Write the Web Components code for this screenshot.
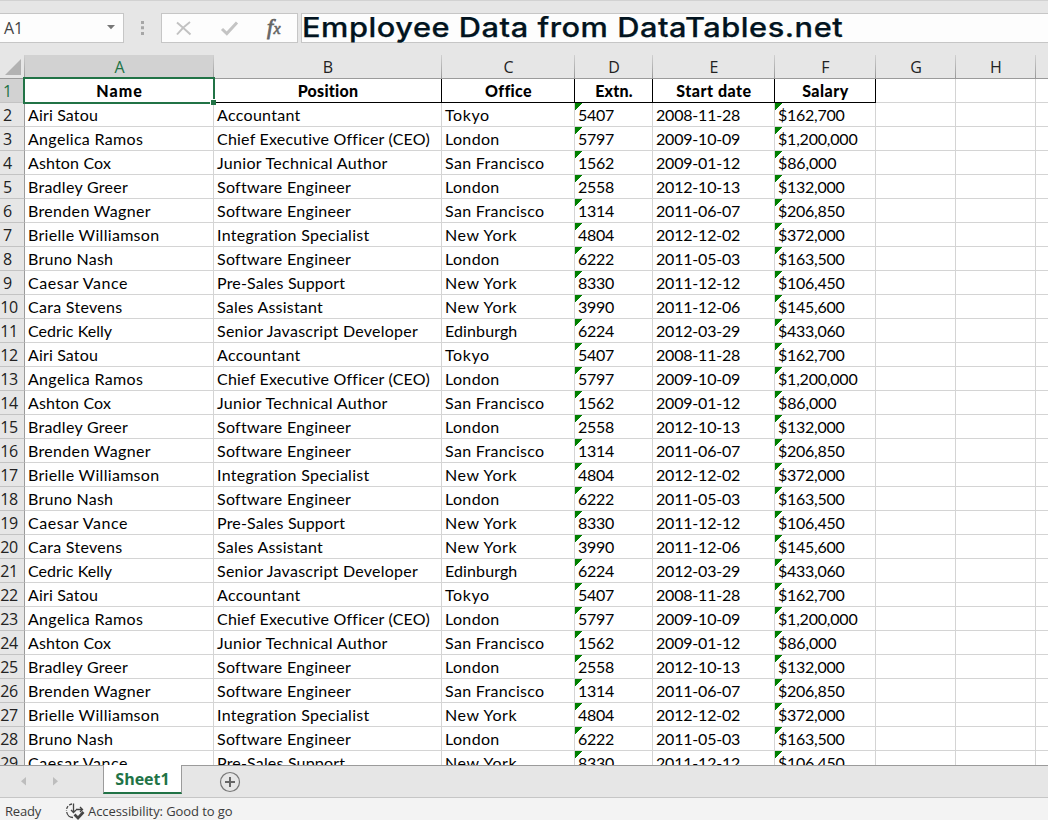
<!DOCTYPE html>
<html lang="en">
<head>
<meta charset="utf-8">
<title>Employee Data</title>
<style>
html,body{margin:0;height:100%;overflow:hidden;background:#e6e6e6}
</style>
</head>
<body>
<sheet-app></sheet-app>
<script>
class Base extends HTMLElement {
  render(css, html) {
    if (!this.shadowRoot) this.attachShadow({ mode: 'open' });
    this.shadowRoot.innerHTML = `<style>*{box-sizing:border-box}${css}</style>${html}`;
  }
}

/* Text whose tracking is adjusted so that it takes a given width. */
class FitText extends Base {
  connectedCallback() {
    this.render(':host{display:inline-block;white-space:pre}', '<slot></slot>');
    const w = parseFloat(this.getAttribute('w'));
    if (!w) return;
    const now = this.offsetWidth;
    this.style.letterSpacing = (w - now) / this.textContent.length + 'px';
  }
}
customElements.define('fit-text', FitText);

class FormulaBar extends Base {
  connectedCallback() {
    this.render(`
      :host{display:flex;height:55px;flex:none;background:#e6e6e6;border-top:1px solid #d2d2d2;padding-top:12px;align-items:flex-start;overflow:hidden}
      .box{height:30px;background:#fdfdfd;border:1px solid #c6c6c6;display:flex;align-items:center;flex:none}
      .name{width:124px;border-left:0;justify-content:space-between;padding:0 7px 0 4px;font:16px/26px "Open Sans",sans-serif;color:#444}
      .dots{width:37px;height:30px;flex:none}
      .tools{width:137px}
      .input{width:760px;margin-left:3px;font:500 27px/30px Inter,sans-serif;color:#021420}
      .input fit-text{transform:scaleX(1.14);transform-origin:0 0;-webkit-text-stroke:.25px #021420}
      svg{display:block}`,
      `<div class="box name"><fit-text w="19">A1</fit-text><svg width="9" height="6"><path d="M0 0h8L4 4.300z" fill="#777"/></svg></div>
       <svg class="dots" viewBox="0 0 37 30"><path d="M17 8h3v3h-3zM17 13.300h3v3h-3zM17 19h3v3h-3z" fill="#a6a6a6"/></svg>
       <div class="box tools"><svg width="135" height="28" viewBox="162 14 135 28">
         <path d="M177 22.500q6 5 13.500 12M190 22q-7 5-13 12.500" fill="none" stroke="#c2c2c2" stroke-width="2"/>
         <path d="M222 29l4.800 4.600L237 22.500" fill="none" stroke="#c4c4c4" stroke-width="3"/>
         <text x="267" y="33.500" font-family="Liberation Serif,serif" font-style="italic" font-size="22" fill="#666" stroke="#666" stroke-width=".8">f</text>
         <text x="273.500" y="34" font-family="Liberation Serif,serif" font-style="italic" font-size="16" fill="#666" stroke="#666" stroke-width=".6">x</text>
       </svg></div>
       <div class="box input"><fit-text w="475">Employee Data from DataTables.net</fit-text></div>`);
  }
}
customElements.define('formula-bar', FormulaBar);

const COLS = 'grid-template-columns:25px 189px 228px 133px 78px 122px 101px 80px 80px 12px';

class ColumnHeads extends Base {
  connectedCallback() {
    this.render(`
      :host{display:grid;${COLS};height:24px;flex:none;background:#e6e6e6;border-bottom:1px solid #9b9b9b;font:16px/24px "Open Sans",sans-serif;color:#222}
      div{text-align:center;background:linear-gradient(#d0d0d0,#979797) right/1px 100% no-repeat}
      .corner{padding:4px 0 0 5px}
      .sel{background-color:#d2d2d2;color:#217346}
      .last{background:none}
      svg{display:block}`,
      `<div class="corner"><svg width="17" height="16"><path d="M16 0v16H0z" fill="#b2b2b2"/></svg></div>` +
      [...'ABCDEFGH'].map((c, i) => `<div${i ? '' : ' class="sel"'}>${c}</div>`).join('') + '<div class="last"></div>');
  }
}
customElements.define('column-heads', ColumnHeads);

class SheetRow extends Base {
  connectedCallback() {
    const n = this.getAttribute('n');
    const head = n === '1';
    this.render(`
      :host{display:grid;${COLS};height:24px;font:16px/24px Lato,sans-serif;color:#000;background:#fff}
      div{border-right:1px solid #d4d4d4;border-bottom:1px solid #d4d4d4;padding-left:3px;white-space:nowrap;position:relative;height:24px;line-height:23px}
      .num{background:#e6e6e6;border-right-color:#9b9b9b;border-bottom-color:#c3c3c3;color:#222;font:16px/24px "Open Sans",sans-serif;padding:0 ${n.length > 1 ? 6 : 9}px 0 0;display:flex;justify-content:center}
      .num fit-text{flex:none}
      .warn{background:linear-gradient(135deg,#008000 5px,transparent 5.500px) 0 0/8px 8px no-repeat}
      .h{font-weight:900;text-align:center;border-color:#000;padding-left:1px}
      .h.first{z-index:2}
      .first::before{content:"";position:absolute;inset:-2px;border:2px solid #217346}
      .first::after{content:"";position:absolute;right:-3px;bottom:-3px;width:5px;height:5px;background:#217346;box-shadow:-1px -1px 0 #fff}
      .sel{background:#d2d2d2;color:#217346}
      .last{border-right:0}`,
      `<div class="num${head ? ' sel' : ''}"><fit-text w="${n.length > 1 ? 17 : 9}">${n}</fit-text></div>` +
      this.cells.map(([t, w], i) =>
        `<div class="${head ? 'h' + (i ? '' : ' first') : i === 3 || i === 5 ? 'warn' : ''}"><fit-text w="${head ? w : w - (i ? 1 : .5)}">${t}</fit-text></div>`).join('') +
      '<div></div><div></div><div class="last"></div>');
  }
}
customElements.define('sheet-row', SheetRow);

const HEAD = [['Name', 46], ['Position', 61], ['Office', 46], ['Extn.', 38], ['Start date', 75], ['Salary', 47]];
const W = {
  'Airi Satou': 71, 'Angelica Ramos': 116, 'Ashton Cox': 84, 'Bradley Greer': 101, 'Brenden Wagner': 123,
  'Brielle Williamson': 132, 'Bruno Nash': 86, 'Caesar Vance': 100, 'Cara Stevens': 95, 'Cedric Kelly': 85,
  'Accountant': 85, 'Chief Executive Officer (CEO)': 213, 'Junior Technical Author': 172, 'Software Engineer': 135,
  'Integration Specialist': 154, 'Pre-Sales Support': 129, 'Sales Assistant': 107, 'Senior Javascript Developer': 202,
  'Tokyo': 46, 'London': 56, 'San Francisco': 100, 'New York': 73, 'Edinburgh': 73,
  '$1,200,000': 81, '$86,000': 59
};
const PEOPLE = `Airi Satou|Accountant|Tokyo|5407|2008-11-28|$162,700
Angelica Ramos|Chief Executive Officer (CEO)|London|5797|2009-10-09|$1,200,000
Ashton Cox|Junior Technical Author|San Francisco|1562|2009-01-12|$86,000
Bradley Greer|Software Engineer|London|2558|2012-10-13|$132,000
Brenden Wagner|Software Engineer|San Francisco|1314|2011-06-07|$206,850
Brielle Williamson|Integration Specialist|New York|4804|2012-12-02|$372,000
Bruno Nash|Software Engineer|London|6222|2011-05-03|$163,500
Caesar Vance|Pre-Sales Support|New York|8330|2011-12-12|$106,450
Cara Stevens|Sales Assistant|New York|3990|2011-12-06|$145,600
Cedric Kelly|Senior Javascript Developer|Edinburgh|6224|2012-03-29|$433,060`
  .split('\n').map(l => l.split('|').map((t, i) => [t, W[t] || [0, 0, 0, 37, 85, 68][i]]));

class SheetGrid extends Base {
  connectedCallback() {
    /* The clip leaves 2px above the grid for the selection frame. */
    this.render(':host{display:block;height:686px;flex:none;clip-path:inset(-2px 0 0 0);background:#fff}', '');
    for (let n = 1; n <= 29; n++) {
      const row = document.createElement('sheet-row');
      row.setAttribute('n', n);
      row.cells = n === 1 ? HEAD : PEOPLE[(n - 2) % 10];
      this.shadowRoot.append(row);
    }
  }
}
customElements.define('sheet-grid', SheetGrid);

class SheetTabs extends Base {
  connectedCallback() {
    this.render(`
      :host{display:flex;height:32px;flex:none;background:linear-gradient(#9b9b9b,#9b9b9b) 0 0/100% 1px no-repeat #e6e6e6}
      .nav{width:103px}
      .tab{width:79px;height:29px;background:#fff;border:solid #9b9b9b;border-width:0 1px;border-bottom:2px solid #217346;color:#217346;font:700 16px/28px "Open Sans",sans-serif;text-align:center}
      .add{margin:6px 0 0 37px}`,
      `<svg class="nav" height="32"><path d="M26 12v8.500L21 16.200zM53 12v8.500L58 16.200z" fill="#bdbdbd"/></svg>
       <div class="tab"><fit-text w="54">Sheet1</fit-text></div>
       <svg class="add" width="22" height="22"><circle cx="11" cy="11" r="9.500" fill="none" stroke="#777" stroke-width="1.200"/><path d="M6 11h10M11 6v10" stroke="#666" stroke-width="2"/></svg>`);
  }
}
customElements.define('sheet-tabs', SheetTabs);

class StatusBar extends Base {
  connectedCallback() {
    this.render(`
      :host{display:flex;height:23px;flex:none;background:#f3f3f3;border-top:1px solid #c6c6c6;font:13px/26px "Open Sans",sans-serif;color:#3b3b3b;padding-left:5px;overflow:hidden}
      svg{margin:4px 3px 0 24px;flex:none}`,
      `<fit-text w="36">Ready</fit-text>
       <svg width="20" height="18" viewBox="0 0 20 18" fill="none" stroke="#444" stroke-width="1.300">
         <path d="M7 2A6.500 6.500 0 0 0 1.500 9" stroke-dasharray="3 1.500"/><path d="M1.700 10A6.500 6.500 0 0 0 8 15.500"/>
         <path d="M11 7.500h6.500M15 5l2.500 2.500L15 10M8.500 1.500v9M6 8l2.500 2.500L11 8"/>
         <path d="M9.500 12.500l3.500 3.500 5.500-6" stroke-width="2.600"/></svg>
       <fit-text w="145">Accessibility: Good to go</fit-text>`);
  }
}
customElements.define('status-bar', StatusBar);

class SheetApp extends Base {
  connectedCallback() {
    this.render(':host{display:flex;flex-direction:column;width:1048px;height:820px;overflow:hidden}',
      '<formula-bar></formula-bar><column-heads></column-heads><sheet-grid></sheet-grid><sheet-tabs></sheet-tabs><status-bar></status-bar>');
  }
}
customElements.define('sheet-app', SheetApp);
</script>
</body>
</html>
